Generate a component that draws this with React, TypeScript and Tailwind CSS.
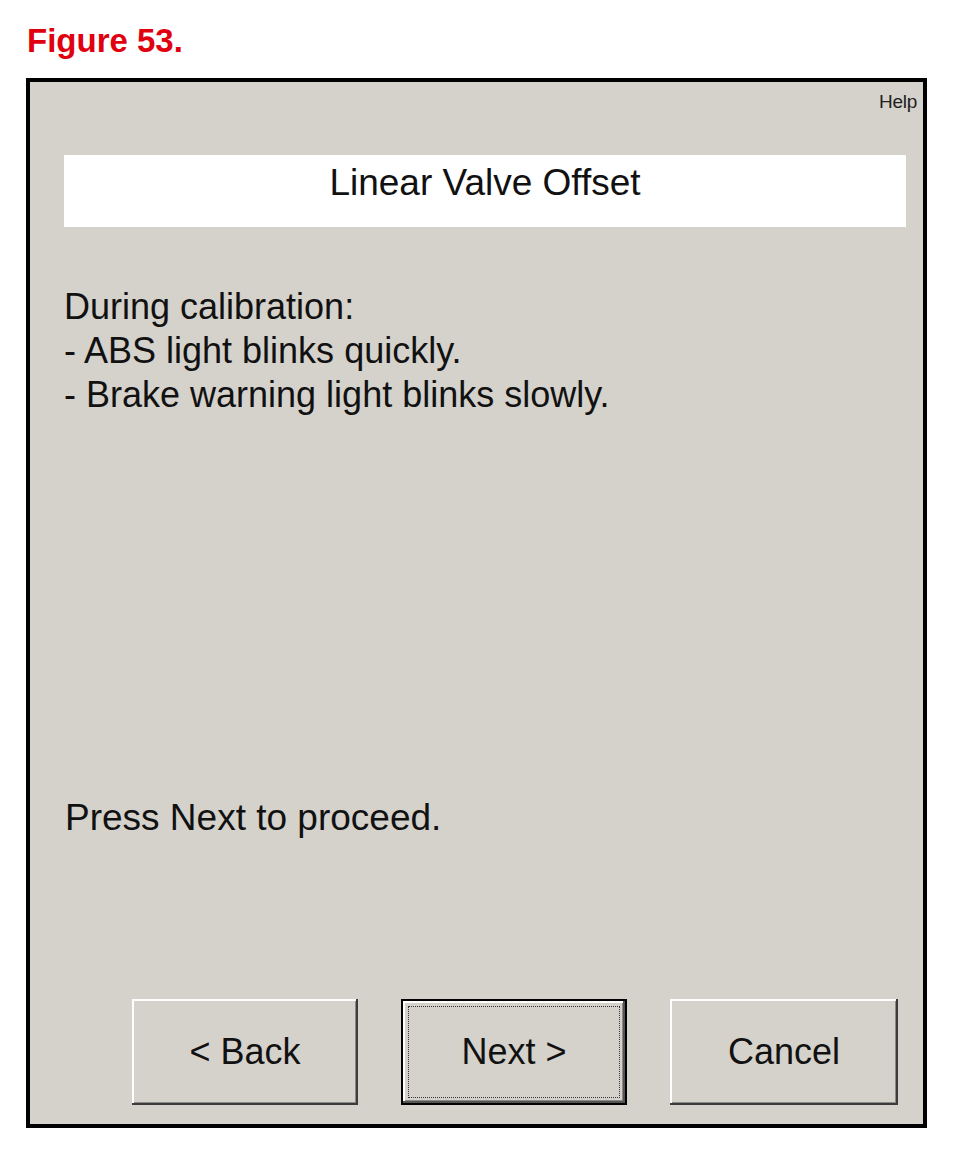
import React from "react";

const btnBase =
  "w-[226px] h-[106px] flex items-center justify-center text-[36px] leading-[40px] text-[#111] bg-[#d5d1cb]";

export default function App() {
  return (
    <div
      className="w-[973px] h-[1153px] bg-white overflow-hidden"
      style={{ fontFamily: '"Liberation Sans", Arial, sans-serif' }}
    >
      <div className="pt-[22px] pl-[27px] text-[33px] leading-[38px] font-bold text-[#e0000f]">
        Figure 53.
      </div>
      <div className="mt-[18px] ml-[26px] w-[901px] h-[1050px] border-4 border-black bg-[#d5d1cb] flex flex-col">
        <div className="pt-[10px] pr-[6px] text-right text-[19px] leading-[20px] text-[#222] tracking-[-0.3px]">
          Help
        </div>
        <div className="mt-[43px] ml-[34px] mr-[17px] h-[72px] bg-white pt-[8px] text-center text-[37px] leading-[40px] text-[#111]">
          Linear Valve Offset
        </div>
        <div className="mt-[58px] ml-[34px] text-[36px] leading-[44px] text-[#111]">
          <div>During calibration:</div>
          <div>- ABS light blinks quickly.</div>
          <div>- Brake warning light blinks slowly.</div>
        </div>
        <div className="mt-[379px] ml-[35px] text-[37px] leading-[44px] text-[#111]">
          Press Next to proceed.
        </div>
        <div className="mt-[159px] ml-[102px] flex gap-[43px]">
          <div
            className={`${btnBase} shadow-[inset_-2px_-2px_0_#3c3c3c,inset_2px_2px_0_#ffffff,inset_-3px_-3px_0_#8c8a86]`}
          >
            &lt; Back
          </div>
          <div
            className={`${btnBase} border-2 border-black shadow-[inset_-2px_-2px_0_#555555,inset_2px_2px_0_#ffffff,inset_-3px_-3px_0_#8c8a86] outline-1 outline-dotted outline-[#333] outline-offset-[-8px]`}
          >
            Next &gt;
          </div>
          <div
            className={`${btnBase} w-[228px] shadow-[inset_-2px_-2px_0_#3c3c3c,inset_2px_2px_0_#ffffff,inset_-3px_-3px_0_#8c8a86]`}
          >
            Cancel
          </div>
        </div>
      </div>
    </div>
  );
}
